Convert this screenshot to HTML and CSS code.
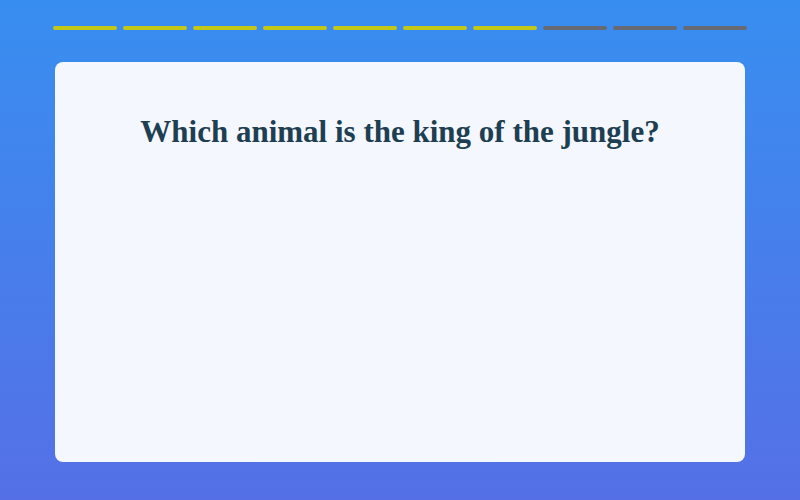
FILE: index.html
```html
<!DOCTYPE html>
<html>
<head>
<meta charset="utf-8">
<link rel="stylesheet" href="styles.css">
</head>
<body>
<div class="page">
  <div class="progress">
    <span class="seg done"></span>
    <span class="seg done"></span>
    <span class="seg done"></span>
    <span class="seg done"></span>
    <span class="seg done"></span>
    <span class="seg done"></span>
    <span class="seg done"></span>
    <span class="seg"></span>
    <span class="seg"></span>
    <span class="seg"></span>
  </div>
  <div class="card">
    <h1 class="question">Which animal is the king of the jungle?</h1>
  </div>
</div>
</body>
</html>
```
FILE: styles.css
```css
html, body {
  margin: 0;
  padding: 0;
  width: 800px;
  height: 500px;
  overflow: hidden;
}
body {
  background: linear-gradient(180deg, #388ef0 0%, #5570e7 100%);
  font-family: "Liberation Serif", "DejaVu Serif", serif;
}
.page {
  display: flex;
  flex-direction: column;
  padding: 26px 53px 0 53px;
}
.progress {
  display: flex;
  gap: 6px;
  height: 4px;
}
.seg {
  flex: 1;
  border-radius: 2px;
  background: #676a72;
}
.seg.done {
  background: #c3c816;
}
.card {
  margin: 32px 2px 0 2px;
  height: 400px;
  background: #f4f7fe;
  border-radius: 8px;
  display: flex;
  flex-direction: column;
  align-items: center;
}
.question {
  margin: 50px 0 0 0;
  font-size: 31px;
  font-weight: bold;
  color: #1e3e52;
  line-height: 40px;
}
```
